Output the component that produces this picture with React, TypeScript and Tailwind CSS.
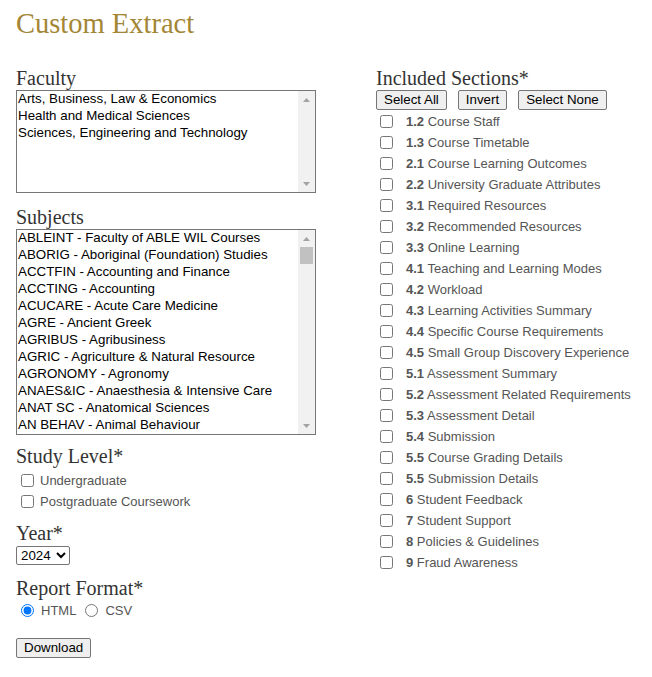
import React from "react";

const faculties = [
  "Arts, Business, Law & Economics",
  "Health and Medical Sciences",
  "Sciences, Engineering and Technology",
];

const subjects = [
  "ABLEINT - Faculty of ABLE WIL Courses",
  "ABORIG - Aboriginal (Foundation) Studies",
  "ACCTFIN - Accounting and Finance",
  "ACCTING - Accounting",
  "ACUCARE - Acute Care Medicine",
  "AGRE - Ancient Greek",
  "AGRIBUS - Agribusiness",
  "AGRIC - Agriculture & Natural Resource",
  "AGRONOMY - Agronomy",
  "ANAES&IC - Anaesthesia & Intensive Care",
  "ANAT SC - Anatomical Sciences",
  "AN BEHAV - Animal Behaviour",
];

const sections: [string, string][] = [
  ["1.2", "Course Staff"],
  ["1.3", "Course Timetable"],
  ["2.1", "Course Learning Outcomes"],
  ["2.2", "University Graduate Attributes"],
  ["3.1", "Required Resources"],
  ["3.2", "Recommended Resources"],
  ["3.3", "Online Learning"],
  ["4.1", "Teaching and Learning Modes"],
  ["4.2", "Workload"],
  ["4.3", "Learning Activities Summary"],
  ["4.4", "Specific Course Requirements"],
  ["4.5", "Small Group Discovery Experience"],
  ["5.1", "Assessment Summary"],
  ["5.2", "Assessment Related Requirements"],
  ["5.3", "Assessment Detail"],
  ["5.4", "Submission"],
  ["5.5", "Course Grading Details"],
  ["5.5", "Submission Details"],
  ["6", "Student Feedback"],
  ["7", "Student Support"],
  ["8", "Policies & Guidelines"],
  ["9", "Fraud Awareness"],
];

const serif = "font-['Liberation_Serif','Times_New_Roman',serif]";
const sans = "font-['Liberation_Sans',Arial,sans-serif]";

function Label({ children }: { children: React.ReactNode }) {
  return (
    <div className={`${serif} text-[20px] leading-[24px] text-[#333]`}>
      {children}
    </div>
  );
}

function Arrow({ up }: { up?: boolean }) {
  return (
    <div className="h-[17px] flex items-center justify-center">
      <svg width="7" height="4" viewBox="0 0 7 4">
        <path d={up ? "M0 4 L3.5 0 L7 4 Z" : "M0 0 L3.5 4 L7 0 Z"} fill="#a3a3a3" />
      </svg>
    </div>
  );
}

function ListBox({ items, height, thumb }: { items: string[]; height: string; thumb?: boolean }) {
  return (
    <div className={`${height} w-[300px] border border-[#767676] flex bg-white`}>
      <div className="flex-1 overflow-hidden text-[13.33px] text-black">
        {items.map((s) => (
          <div key={s} className="h-[17px] leading-[15px] pl-[1px] whitespace-nowrap">
            {s}
          </div>
        ))}
      </div>
      <div className="w-[17px] bg-[#f1f1f1] flex flex-col">
        <Arrow up />
        <div className="flex-1 px-[2px]">
          {thumb && <div className="h-[17px] bg-[#c1c1c1]" />}
        </div>
        <Arrow />
      </div>
    </div>
  );
}

const btn =
  "h-[20px] px-[7px] text-[13.33px] leading-[16px] text-black bg-[#efefef] border border-[#767676] rounded-[2px]";

export default function App() {
  return (
    <div className={`min-h-screen bg-white px-4 ${sans}`}>
      <h1 className={`${serif} pt-[8px] h-[44px] text-[28.5px] leading-[32px] text-[#a38636]`}>
        Custom Extract
      </h1>

      <div className="flex gap-[60px] pt-[22px]">
        {/* left column */}
        <div className="w-[300px] flex flex-col">
          <Label>Faculty</Label>
          <ListBox items={faculties} height="h-[103px]" />

          <div className="mt-[12px]">
            <Label>Subjects</Label>
          </div>
          <ListBox items={subjects} height="h-[206px]" thumb />

          <div className="mt-[9px]">
            <Label>Study Level*</Label>
          </div>
          <div className="flex flex-col mt-[2px] text-[13px] text-[#555]">
            {["Undergraduate", "Postgraduate Coursework"].map((s) => (
              <label key={s} className="flex items-center h-[21px]">
                <input type="checkbox" className="ml-[5px] mr-[6px] w-[13px] h-[13px]" />
                {s}
              </label>
            ))}
          </div>

          <div className="mt-[9px] h-[22px]">
            <Label>Year*</Label>
          </div>
          <div>
            <select className="h-[19px] w-[54px] text-[13.33px] border border-[#767676] rounded-[2px] text-black">
              <option>2024</option>
              <option>2023</option>
            </select>
          </div>

          <div className="mt-[9px]">
            <Label>Report Format*</Label>
          </div>
          <div className="flex items-center h-[21px] text-[13px] text-[#555]">
            <input type="radio" name="fmt" defaultChecked className="ml-[5px] mr-[7px] w-[13px] h-[13px]" />
            HTML
            <input type="radio" name="fmt" className="ml-[9px] mr-[7px] w-[13px] h-[13px]" />
            CSV
          </div>

          <div className="mt-[14px]">
            <button className={btn}>Download</button>
          </div>
        </div>

        {/* right column */}
        <div className="flex flex-col">
          <Label>Included Sections*</Label>
          <div className="flex gap-[11px]">
            <button className={btn}>Select All</button>
            <button className={btn}>Invert</button>
            <button className={btn}>Select None</button>
          </div>
          <div className="flex flex-col mt-[1px] text-[13px] text-[#555]">
            {sections.map(([n, t], i) => (
              <label key={i} className="flex items-center h-[21px]">
                <input type="checkbox" className="ml-[4px] mr-[13px] w-[13px] h-[13px]" />
                <span>
                  <b className="font-bold">{n}</b> {t}
                </span>
              </label>
            ))}
          </div>
        </div>
      </div>
    </div>
  );
}
